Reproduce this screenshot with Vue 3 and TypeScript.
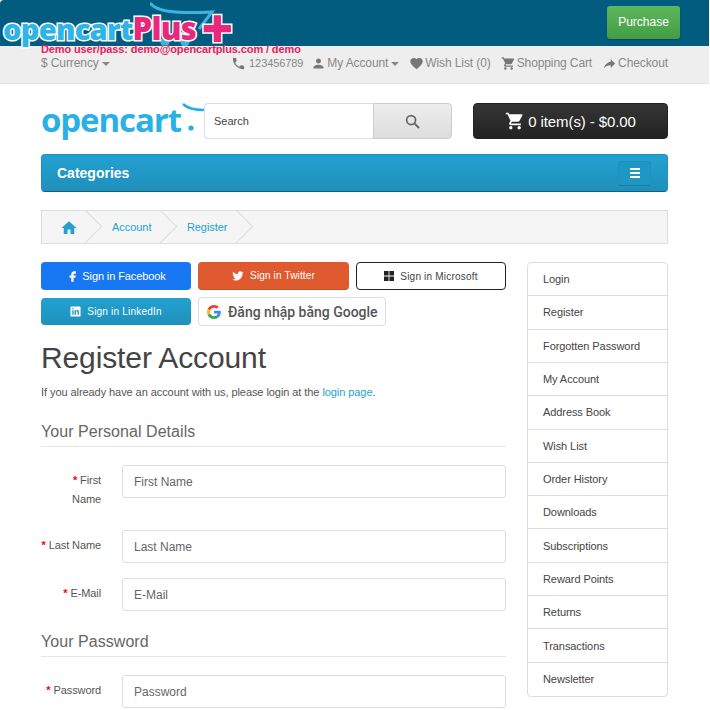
<template>
  <div class="page">
    <div class="banner">
      <div class="plus-logo">
        <svg class="swoosh" width="70" height="44" viewBox="0 0 70 44">
          <path d="M0 1 C6 9 22 12 62 10 L49 27" fill="none" stroke="#3cb4e0" stroke-width="3" />
          <circle cx="15" cy="40" r="4.5" fill="#3cb4e0" />
          <circle cx="35" cy="40" r="4.5" fill="#3cb4e0" />
        </svg>
        <span class="plus-blue">opencart</span><span class="plus-pink">Plus</span><span class="plus-cross">+</span>
      </div>
      <a class="purchase">Purchase</a>
    </div>

    <div class="topbar">
      <div class="demo">Demo user/pass: demo@opencartplus.com / demo</div>
      <div class="top-row">
        <span class="top-link">$ Currency <i class="caret"></i></span>
        <div class="top-links">
          <span v-for="link in topLinks" :key="link.label" class="top-link">
            <svg class="top-icon" viewBox="0 0 24 24"><path :d="link.icon" /></svg>
            <span :class="{ phone: link.label === '123456789' }">{{ link.label }}</span>
            <i v-if="link.caret" class="caret"></i>
          </span>
        </div>
      </div>
    </div>

    <div class="wrap">
      <header class="head">
        <div class="logo">
          <span>opencart</span>
          <svg class="logo-cart" width="26" height="36" viewBox="0 0 26 36">
            <path d="M5 1 C9 5 15 7 26 7" fill="none" stroke="#29aee3" stroke-width="2.5" />
            <circle cx="13" cy="25" r="2.6" fill="#29aee3" />
          </svg>
        </div>
        <div class="search">
          <input class="search-input" placeholder="Search" />
          <button class="search-btn">
            <svg width="15" height="15" viewBox="0 0 16 16">
              <circle cx="6.5" cy="6.5" r="4.8" fill="none" stroke="#666" stroke-width="1.8" />
              <path d="M10 10l5 5" stroke="#666" stroke-width="2.2" />
            </svg>
          </button>
        </div>
        <button class="cart-btn">
          <svg width="20" height="20" viewBox="0 0 24 24"><path :d="icons.cart" fill="#fff" /></svg>
          0 item(s) - $0.00
        </button>
      </header>

      <nav class="menu">
        <span class="menu-title">Categories</span>
        <button class="menu-toggle"><i></i><i></i><i></i></button>
      </nav>

      <ul class="breadcrumb">
        <li class="crumb-home">
          <svg width="18" height="18" viewBox="0 0 24 24"><path :d="icons.home" fill="#23a1d1" /></svg>
        </li>
        <li><a>Account</a></li>
        <li><a>Register</a></li>
      </ul>

      <div class="columns">
        <main class="content">
          <div class="socials">
            <a class="social fb">
              <svg width="14" height="14" viewBox="0 0 24 24"><path d="M14 8h3V4h-3c-2.8 0-5 2.2-5 5v2H6v4h3v7h4v-7h3l1-4h-4V9c0-.6.4-1 1-1z" fill="#fff" /></svg>
              Sign in Facebook
            </a>
            <a class="social tw">
              <svg width="12" height="12" viewBox="0 0 24 24"><path d="M23 4.9c-.8.4-1.7.6-2.6.7.9-.6 1.6-1.4 2-2.5-.9.5-1.9.9-2.9 1.1C18.7 3.3 17.5 2.7 16.2 2.7c-2.5 0-4.6 2.1-4.6 4.6 0 .4 0 .7.1 1C7.9 8.1 4.5 6.3 2.2 3.5c-.4.7-.6 1.5-.6 2.3 0 1.6.8 3 2 3.8-.7 0-1.5-.2-2.1-.6v.1c0 2.2 1.6 4.1 3.7 4.5-.4.1-.8.2-1.2.2-.3 0-.6 0-.9-.1.6 1.8 2.3 3.2 4.3 3.2-1.6 1.2-3.6 2-5.7 2-.4 0-.7 0-1.1-.1 2 1.3 4.5 2.1 7.1 2.1 8.5 0 13.1-7 13.1-13.1v-.6c.9-.6 1.7-1.4 2.3-2.3z" fill="#fff" /></svg>
              Sign in Twitter
            </a>
            <a class="social ms">
              <svg width="10" height="10" viewBox="0 0 10 10"><path d="M0 0h4.6v4.6H0zM5.4 0H10v4.6H5.4zM0 5.4h4.6V10H0zM5.4 5.4H10V10H5.4z" fill="#222" /></svg>
              Sign in Microsoft
            </a>
            <a class="social li">
              <svg width="11" height="11" viewBox="0 0 24 24"><path d="M3 1h18a2 2 0 0 1 2 2v18a2 2 0 0 1-2 2H3a2 2 0 0 1-2-2V3a2 2 0 0 1 2-2zm2 8v10h3V9zm1.500-4.500a1.700 1.700 0 1 0 0 3.400 1.700 1.700 0 0 0 0-3.400zM10 9v10h3v-5.500c0-3 3.500-3 3.500 0V19h3v-6.500c0-4.500-4.800-4.500-6.500-2V9z" fill="#fff" fill-rule="evenodd" /></svg>
              Sign in LinkedIn
            </a>
            <a class="google">
              <svg width="14" height="14" viewBox="0 0 48 48">
                <path fill="#EA4335" d="M24 9.500c3.540 0 6.710 1.220 9.210 3.600l6.850-6.850C35.900 2.380 30.470 0 24 0 14.620 0 6.510 5.380 2.560 13.220l7.980 6.190C12.430 13.720 17.740 9.500 24 9.500z" />
                <path fill="#4285F4" d="M46.980 24.550c0-1.570-.15-3.090-.38-4.550H24v9.020h12.940c-.58 2.960-2.260 5.480-4.780 7.180l7.730 6c4.510-4.180 7.090-10.360 7.090-17.650z" />
                <path fill="#FBBC05" d="M10.530 28.590c-.48-1.450-.76-2.990-.76-4.590s.27-3.140.76-4.590l-7.980-6.190C.92 16.460 0 20.120 0 24c0 3.880.92 7.540 2.560 10.780l7.970-6.190z" />
                <path fill="#34A853" d="M24 48c6.480 0 11.930-2.130 15.890-5.810l-7.730-6c-2.150 1.450-4.920 2.300-8.160 2.300-6.260 0-11.570-4.220-13.470-9.910l-7.980 6.190C6.510 42.620 14.620 48 24 48z" />
              </svg>
              Đăng nhập bằng Google
            </a>
          </div>

          <h1>Register Account</h1>
          <p class="intro">If you already have an account with us, please login at the <a>login page</a>.</p>

          <section class="group first">
            <div class="legend">Your Personal Details</div>
            <div v-for="f in personalFields" :key="f.name" class="field">
              <label><span class="req">*</span> {{ f.label }}</label>
              <input :placeholder="f.name" />
            </div>
          </section>

          <section class="group second">
            <div class="legend">Your Password</div>
            <div class="field">
              <label><span class="req">*</span> Password</label>
              <input placeholder="Password" />
            </div>
          </section>
        </main>

        <aside class="sidebar">
          <a v-for="item in sideLinks" :key="item" class="side-item">{{ item }}</a>
        </aside>
      </div>
    </div>
  </div>
</template>

<script setup lang="ts">
interface TopLink {
  label: string
  icon: string
  caret?: boolean
}

const icons = {
  home: 'M10 20v-6h4v6h5v-8h3L12 3 2 12h3v8z',
  cart: 'M7 18c-1.100 0-1.990.9-1.990 2S5.900 22 7 22s2-.9 2-2-.9-2-2-2zM1 2v2h2l3.600 7.590-1.350 2.450c-.16.28-.25.61-.25.96 0 1.100.9 2 2 2h12v-2H7.420c-.14 0-.25-.11-.25-.25l.03-.12.9-1.630h7.450c.75 0 1.410-.41 1.750-1.030l3.580-6.490c.08-.14.12-.31.12-.48 0-.55-.45-1-1-1H5.210l-.94-2H1zm16 16c-1.100 0-1.990.9-1.990 2s.89 2 1.990 2 2-.9 2-2-.9-2-2-2z'
}

const topLinks: TopLink[] = [
  { label: '123456789', icon: 'M6.620 10.790c1.440 2.830 3.760 5.140 6.590 6.590l2.200-2.200c.27-.27.67-.36 1.020-.24 1.120.37 2.330.57 3.570.57.55 0 1 .45 1 1V20c0 .55-.45 1-1 1-9.390 0-17-7.610-17-17 0-.55.45-1 1-1h3.500c.55 0 1 .45 1 1 0 1.250.2 2.450.57 3.570.11.35.03.74-.25 1.020l-2.200 2.200z' },
  { label: 'My Account', icon: 'M12 12c2.210 0 4-1.790 4-4s-1.790-4-4-4-4 1.790-4 4 1.790 4 4 4zm0 2c-2.670 0-8 1.340-8 4v2h16v-2c0-2.660-5.330-4-8-4z', caret: true },
  { label: 'Wish List (0)', icon: 'M12 21.350l-1.450-1.320C5.400 15.360 2 12.280 2 8.500 2 5.420 4.420 3 7.500 3c1.740 0 3.410.81 4.500 2.090C13.090 3.810 14.760 3 16.500 3 19.580 3 22 5.420 22 8.500c0 3.780-3.400 6.860-8.550 11.540L12 21.350z' },
  { label: 'Shopping Cart', icon: icons.cart },
  { label: 'Checkout', icon: 'M14 9V5l7 7-7 7v-4.100c-5 0-8.500 1.600-11 5.100 1-5 4-10 11-11z' }
]

// the reference wraps this one label onto two lines
const personalFields = [
  { name: 'First Name', label: 'First\nName' },
  { name: 'Last Name', label: 'Last Name' },
  { name: 'E-Mail', label: 'E-Mail' }
]

const sideLinks = [
  'Login',
  'Register',
  'Forgotten Password',
  'My Account',
  'Address Book',
  'Wish List',
  'Order History',
  'Downloads',
  'Subscriptions',
  'Reward Points',
  'Returns',
  'Transactions',
  'Newsletter'
]
</script>

<style>
html,
body {
  margin: 0;
  background: #fff;
  overflow: hidden;
}
</style>

<style scoped>
.page {
  width: 709px;
  height: 710px;
  overflow: hidden;
  font-family: 'Liberation Sans', Arial, sans-serif;
  font-size: 12px;
  color: #666;
}

.banner {
  position: relative;
  height: 46px;
  background: #025c7f;
  border-top-left-radius: 4px;
  display: flex;
  justify-content: flex-end;
  align-items: flex-start;
  padding: 6px 29px 0 0;
  box-sizing: border-box;
}

.plus-logo {
  position: absolute;
  left: 3px;
  top: 8px;
  z-index: 1;
  font-family: 'Open Sans', sans-serif;
  font-weight: 800;
  font-size: 29px;
  line-height: 40px;
  letter-spacing: -0.7px;
  white-space: nowrap;
  paint-order: stroke fill;
  -webkit-text-stroke: 3px #fff;
}

.swoosh {
  position: absolute;
  left: 147px;
  top: -6px;
}

.plus-blue {
  position: relative;
  color: #2eb4e6;
}

.plus-pink {
  position: relative;
  color: #e8287c;
  font-size: 31px;
}

.plus-cross {
  position: relative;
  color: #e8287c;
  font-size: 55px;
  line-height: 30px;
  margin-left: 5px;
  vertical-align: -8px;
}

.purchase {
  width: 73px;
  height: 33px;
  line-height: 33px;
  text-align: center;
  color: #fff;
  border-radius: 3px;
  background: linear-gradient(#5cb85c, #449d44);
  box-shadow: 0 1px 1px rgba(0, 0, 0, 0.2);
}

.topbar {
  display: flow-root;
  height: 37px;
  background: #eee;
  border-bottom: 1px solid #e2e2e2;
  padding: 0 41px;
  position: relative;
}

.demo {
  position: relative;
  z-index: 2;
  margin-top: -3px;
  font-weight: 700;
  font-size: 11px;
  line-height: 13px;
  color: #e8205f;
  letter-spacing: -0.12px;
}

.top-row {
  display: flex;
  justify-content: space-between;
  line-height: 17px;
  margin-top: -1px;
  color: #888;
}

.top-links {
  display: flex;
  gap: 10px;
}

.top-link {
  display: inline-flex;
  align-items: center;
  gap: 1px;
  white-space: nowrap;
  color: #888;
  letter-spacing: -0.1px;
}

.phone {
  font-size: 11px;
  margin-right: -2px;
  margin-left: 2px;
}

.top-icon {
  width: 15px;
  height: 15px;
  fill: #777;
}

.caret {
  display: inline-block;
  width: 0;
  height: 0;
  margin-left: 2px;
  border-top: 4px solid #888;
  border-left: 4px solid transparent;
  border-right: 4px solid transparent;
}

.wrap {
  padding: 0 41px;
}

.head {
  display: flex;
  align-items: center;
  margin-top: 19px;
  height: 36px;
}

.logo {
  position: relative;
  width: 163px;
  height: 36px;
  font-family: 'Open Sans', sans-serif;
  font-weight: 700;
  font-size: 33px;
  line-height: 34px;
  letter-spacing: -1.1px;
  color: #2bb0e6;
}

.logo-cart {
  position: absolute;
  right: 0;
  top: 0;
}

.search {
  display: flex;
  width: 248px;
  height: 36px;
  position: relative;
}

.search-input {
  flex: 1;
  min-width: 0;
  box-sizing: border-box;
  border: 1px solid #ddd;
  border-right: 0;
  border-radius: 4px 0 0 4px;
  padding: 0 9px;
  font: 11px 'Liberation Sans', Arial, sans-serif;
  outline: none;
}

.search-input::placeholder {
  color: #444;
  opacity: 1;
}

.search-btn {
  width: 79px;
  border: 1px solid #ccc;
  border-radius: 0 4px 4px 0;
  background: linear-gradient(#eee, #ddd);
  display: flex;
  align-items: center;
  justify-content: center;
  padding: 0;
}

.cart-btn {
  margin-left: 21px;
  width: 195px;
  height: 36px;
  border: 1px solid #222;
  border-radius: 4px;
  background: linear-gradient(#363636, #222);
  color: #fff;
  font: 15px 'Liberation Sans', Arial, sans-serif;
  letter-spacing: -0.1px;
  display: flex;
  align-items: center;
  justify-content: center;
  gap: 3px;
  padding: 0;
}

.menu {
  margin-top: 15px;
  height: 38px;
  box-sizing: border-box;
  border: 1px solid #1f90bb;
  border-bottom-color: #145e7a;
  border-radius: 4px;
  background: linear-gradient(#23a1d1, #1f90bb);
  display: flex;
  align-items: center;
  justify-content: space-between;
  padding: 0 16px 0 15px;
}

.menu-title {
  color: #fff;
  font-weight: 700;
  font-size: 14px;
}

.menu-toggle {
  width: 33px;
  height: 25px;
  box-sizing: border-box;
  padding: 0;
  border: 1px solid #1f90bb;
  border-bottom-color: #187ba1;
  border-radius: 3px;
  background: #1f97c5;
  display: flex;
  flex-direction: column;
  align-items: center;
  justify-content: center;
  gap: 2px;
}

.menu-toggle i {
  display: block;
  width: 10px;
  height: 2px;
  background: #fff;
}

.breadcrumb {
  display: flex;
  list-style: none;
  margin: 18px 0 18px;
  padding: 0;
  height: 34px;
  box-sizing: border-box;
  border: 1px solid #ddd;
  background: #f5f5f5;
  overflow: hidden;
  line-height: 32px;
  font-size: 11px;
  letter-spacing: -0.05px;
}

.breadcrumb li {
  position: relative;
  padding: 0 15.5px 0 20px;
  white-space: nowrap;
}

.breadcrumb li.crumb-home {
  width: 50px;
  box-sizing: border-box;
  padding: 6px 0 0 18px;
}

.breadcrumb li::after {
  content: '';
  position: absolute;
  top: 3px;
  right: -5px;
  width: 24px;
  height: 24px;
  border-right: 1px solid #ddd;
  border-bottom: 1px solid #ddd;
  transform: rotate(-45deg);
}

.breadcrumb a {
  color: #23a1d1;
}

.columns {
  display: flex;
  gap: 21px;
}

.content {
  width: 465px;
}

.socials {
  display: grid;
  grid-template-columns: 150px 151px 150px;
  column-gap: 7px;
  row-gap: 8px;
}

.social {
  height: 28px;
  box-sizing: border-box;
  border-radius: 4px;
  display: flex;
  align-items: center;
  justify-content: center;
  gap: 6px;
  color: #fff;
  font-size: 11px;
}

.fb {
  background: #1877f2;
  letter-spacing: -0.1px;
  gap: 2px;
}

.tw {
  background: #e05a30;
  font-size: 10px;
  letter-spacing: 0.15px;
  border-bottom: 1px solid #c74e28;
}

.ms {
  background: #fff;
  border: 1px solid #222;
  color: #444;
  font-size: 10px;
  letter-spacing: 0.2px;
}

.li {
  height: 27px;
  background: linear-gradient(#23a1d1, #1f90bb);
  font-size: 10px;
  letter-spacing: 0.2px;
}

.google {
  grid-column: span 2;
  justify-self: start;
  width: 188px;
  height: 29px;
  margin-top: -1px;
  box-sizing: border-box;
  border: 1px solid #dadce0;
  border-radius: 4px;
  display: flex;
  align-items: center;
  padding-left: 8px;
  gap: 7px;
  font-family: Roboto, sans-serif;
  font-weight: 500;
  font-size: 14px;
  color: #555;
  white-space: nowrap;
}

h1 {
  margin: 15px 0 0;
  font-weight: 400;
  font-size: 30px;
  line-height: 33px;
  letter-spacing: -0.12px;
  color: #444;
}

.intro {
  margin: 10px 0 0;
  font-size: 11px;
  line-height: 16px;
  letter-spacing: -0.07px;
  color: #555;
}

.intro a {
  color: #23a1d1;
}

.legend {
  padding: 1px 0 2px;
  border-bottom: 1px solid #e5e5e5;
  margin-bottom: 18px;
  font-size: 16px;
  line-height: 24px;
  letter-spacing: 0.05px;
  color: #666;
}

.group.first {
  margin-top: 19px;
}

.group.second {
  margin-top: 18px;
}

.field {
  display: grid;
  grid-template-columns: 60px 384px;
  column-gap: 21px;
  align-items: start;
  margin-bottom: 15px;
}

.field label {
  padding: 6px 0;
  text-align: right;
  font-size: 11px;
  line-height: 19px;
  letter-spacing: -0.1px;
  color: #555;
  white-space: pre;
}

.req {
  color: #f00;
  font-weight: 700;
}

.field input {
  height: 33px;
  box-sizing: border-box;
  width: 100%;
  padding: 0 11px;
  border: 1px solid #ddd;
  border-radius: 3px;
  font: 12px 'Liberation Sans', Arial, sans-serif;
  outline: none;
}

.field input::placeholder {
  color: #666;
  opacity: 1;
}

.sidebar {
  width: 141px;
  height: 435px;
  box-sizing: border-box;
  display: grid;
  grid-template-rows: repeat(13, 1fr);
  border: 1px solid #ddd;
  border-radius: 4px;
}

.side-item {
  display: flex;
  align-items: center;
  padding-left: 15px;
  font-size: 11px;
  letter-spacing: -0.08px;
  color: #444;
  border-bottom: 1px solid #ddd;
}

.side-item:last-child {
  border-bottom: 0;
}
</style>
